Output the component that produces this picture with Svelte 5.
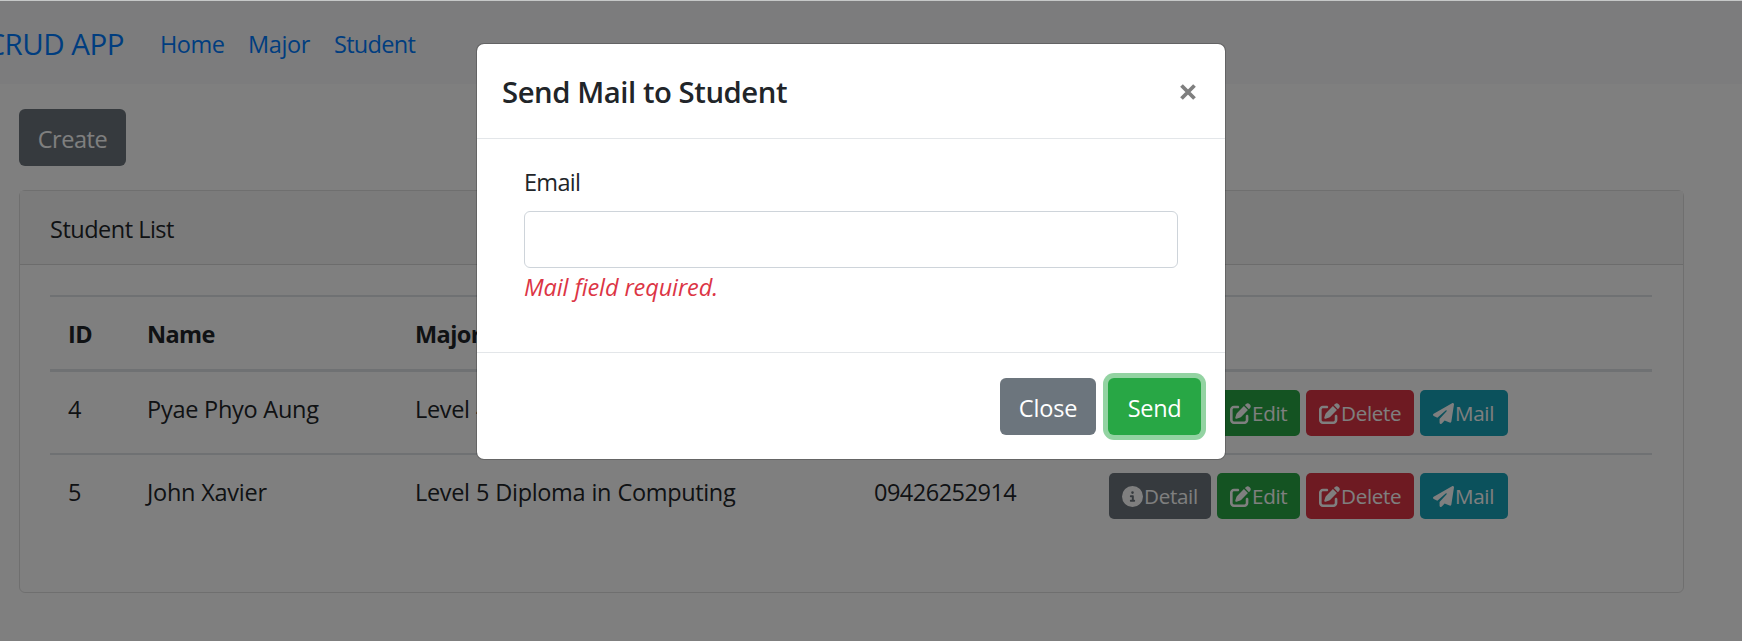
<script>
  const icons = {
    info: 'M256 512A256 256 0 1 0 256 0a256 256 0 1 0 0 512zM216 336h24V272H216c-13.3 0-24-10.7-24-24s10.7-24 24-24h48c13.3 0 24 10.7 24 24v88h8c13.3 0 24 10.7 24 24s-10.7 24-24 24H216c-13.3 0-24-10.7-24-24s10.7-24 24-24zm40-208a32 32 0 1 1 0 64 32 32 0 1 1 0-64z',
    pen: 'M471.6 21.7c-21.9-21.9-57.3-21.9-79.2 0L362.3 51.7l97.9 97.9 30.1-30.1c21.9-21.9 21.9-57.3 0-79.2L471.6 21.7zm-299.2 220c-6.1 6.1-10.8 13.6-13.5 21.9l-29.6 88.8c-2.9 8.6-.6 18.1 5.8 24.6s15.9 8.7 24.6 5.8l88.8-29.6c8.2-2.7 15.7-7.4 21.9-13.5L437.7 172.3 339.7 74.3 172.4 241.7zM96 64C43 64 0 107 0 160V416c0 53 43 96 96 96H352c53 0 96-43 96-96V320c0-17.7-14.3-32-32-32s-32 14.3-32 32v96c0 17.7-14.3 32-32 32H96c-17.7 0-32-14.3-32-32V160c0-17.7 14.3-32 32-32h96c17.7 0 32-14.3 32-32s-14.3-32-32-32H96z',
    plane: 'M498.1 5.6c10.1 7 15.4 19.1 13.5 31.2l-64 416c-1.5 9.7-7.4 18.2-16 23s-18.9 5.4-28 1.6L284 427.7l-68.5 74.1c-8.9 9.7-22.9 12.9-35.2 8.1S160 493.2 160 480V396.4c0-4 1.5-7.8 4.2-10.7L331.8 202.8c5.8-6.3 5.6-16-.4-22s-15.7-6.4-22-.7L106 360.8 17.7 316.6C7.1 311.3 .3 300.7 0 288.9s5.9-22.8 16.1-28.7l448-256c10.7-6.1 23.9-5.5 34 1.4z'
  };

  const actions = [
    { label: 'Detail', icon: 'info', kind: 'detail' },
    { label: 'Edit', icon: 'pen', kind: 'edit' },
    { label: 'Delete', icon: 'pen', kind: 'delete' },
    { label: 'Mail', icon: 'plane', kind: 'mail' }
  ];

  const students = [
    { id: 4, name: 'Pyae Phyo Aung', major: 'Level 4', phone: '' },
    { id: 5, name: 'John Xavier', major: 'Level 5 Diploma in Computing', phone: '09426252914' }
  ];

  let email = $state('');
</script>

<div class="page">
  <nav class="navbar">
    <a class="brand" href="#top">CRUD APP</a>
    <a class="link home" href="#home">Home</a>
    <a class="link major" href="#major">Major</a>
    <a class="link student" href="#student">Student</a>
  </nav>

  <main>
    <button class="btn create">Create</button>

    <section class="card">
      <header class="card-header">Student List</header>
      <div class="table">
        <div class="row head">
          <span>ID</span><span>Name</span><span>Major</span><span></span><span></span>
        </div>
        {#each students as s}
          <div class="row">
            <span>{s.id}</span>
            <span class="name">{s.name}</span>
            <span class="level">{s.major}</span>
            <span class="phone">{s.phone}</span>
            <span class="actions">
              {#each actions as a}
                <button class="sm {a.kind}">
                  <svg viewBox="0 0 512 512"><path d={icons[a.icon]} /></svg>{a.label}
                </button>
              {/each}
            </span>
          </div>
        {/each}
      </div>
    </section>
  </main>

  <div class="backdrop"></div>

  <div class="modal" role="dialog" aria-labelledby="mail-title">
    <header class="modal-header">
      <h5 id="mail-title">Send Mail to Student</h5>
      <button class="dismiss" aria-labelledby="close-button">
        <svg viewBox="0 0 16 16"><path d="M1.5 1.5l13 13M14.5 1.5l-13 13" /></svg>
      </button>
    </header>
    <div class="modal-body">
      <label for="email">Email</label>
      <input id="email" type="email" bind:value={email} />
      <em>Mail field required.</em>
    </div>
    <footer class="modal-footer">
      <button id="close-button" class="btn close">Close</button>
      <button class="btn send">Send</button>
    </footer>
  </div>
</div>

<style>
  :global(body) {
    margin: 0;
    background: #fff;
  }
  .page, .page * {
    box-sizing: border-box;
  }
  .page {
    position: relative;
    height: 641px;
    padding-top: 1px;
    overflow: hidden;
    background: linear-gradient(#c6c8c8 1px, #fff 1px);
    color: #212529;
    font: 400 23.5px/36px 'Open Sans', 'Noto Sans', sans-serif;
    letter-spacing: -0.3px;
    white-space: nowrap;
  }
  button {
    border: 0;
    padding: 0;
    font: inherit;
    letter-spacing: inherit;
    color: #fff;
  }
  .navbar {
    display: flex;
    align-items: center;
    height: 83px;
    background: #f8f9fa;
  }
  a {
    color: #007bff;
    text-decoration: none;
  }
  .brand {
    display: flex;
    justify-content: flex-end;
    width: 124px;
    margin-right: 36px;
    font-size: 29.5px;
    letter-spacing: -0.5px;
    padding-top: 3px;
  }
  .link {
    padding-top: 3px;
  }
  .home {
    width: 88px;
    letter-spacing: -0.5px;
  }
  .major {
    width: 86px;
    letter-spacing: -0.4px;
  }
  .student {
    letter-spacing: -0.7px;
  }
  main {
    padding: 25px 58px 0 19px;
  }
  .btn {
    display: block;
    height: 57px;
    padding-top: 2px;
    border-radius: 6px;
  }
  .create {
    width: 107px;
    background: #6c757d;
    letter-spacing: -0.45px;
  }
  .card {
    height: 403px;
    margin-top: 24px;
    border: 1px solid #dfdfdf;
    border-radius: 6px;
  }
  .card-header {
    height: 74px;
    padding: 20px 30px 0;
    background: #f7f7f7;
    border-bottom: 1px solid #d8d8d8;
    letter-spacing: -0.5px;
  }
  .table {
    padding: 30px 31px 0 30px;
  }
  .row {
    display: grid;
    grid-template-columns: 79px 268px 459px 235px 1fr;
    height: 83px;
    padding-top: 19px;
    border-top: 2px solid #dee2e6;
  }
  .row > span {
    padding-left: 18px;
  }
  .row:nth-child(2) {
    height: 81px;
    border-top: 0;
  }
  .head {
    height: 77px;
    border-bottom: 3px solid #dee2e6;
    font-weight: 700;
    letter-spacing: -0.6px;
  }
  .name {
    letter-spacing: -0.25px;
  }
  .level {
    letter-spacing: -0.35px;
    word-spacing: 0.6px;
  }
  .phone {
    letter-spacing: -0.5px;
  }
  .actions {
    display: flex;
    gap: 6px;
    margin-top: -1px;
  }
  .sm {
    display: flex;
    align-items: center;
    height: 46px;
    padding: 0 0 0 13px;
    border-radius: 5px;
    font-size: 20.6px;
    letter-spacing: -0.3px;
  }
  .sm svg {
    width: 21px;
    height: 21px;
    flex: none;
    fill: #fff;
    margin-right: 1px;
  }
  .detail {
    width: 102px;
    background: #6c757d;
  }
  .edit {
    width: 83px;
    background: #28a745;
  }
  .delete {
    width: 108px;
    background: #dc3545;
  }
  .mail {
    width: 88px;
    background: #17a2b8;
  }
  .backdrop {
    position: absolute;
    inset: 1px 0 0;
    background: rgba(0, 0, 0, 0.5);
  }
  .modal {
    position: absolute;
    left: 476px;
    top: 43px;
    width: 750px;
    height: 417px;
    display: flex;
    flex-direction: column;
    background: #fff;
    background-clip: padding-box;
    border: 1px solid rgba(0, 0, 0, 0.2);
    border-radius: 8px;
  }
  .modal-header {
    display: flex;
    justify-content: space-between;
    height: 95px;
    padding: 26px 29px 0 25px;
    border-bottom: 1px solid #e3e6e9;
  }
  h5 {
    margin: 0;
    font-size: 29.3px;
    line-height: 44px;
    font-weight: 600;
    letter-spacing: -0.45px;
  }
  .dismiss {
    display: flex;
    width: 16px;
    height: 16px;
    margin-top: 14px;
    background: none;
  }
  .dismiss svg {
    width: 16px;
    height: 16px;
    fill: none;
    stroke: #7f7f7f;
    stroke-width: 3.8;
  }
  .modal-body {
    display: flex;
    flex-direction: column;
    height: 213px;
    padding: 25px 47px 0;
  }
  label {
    letter-spacing: -0.7px;
  }
  input {
    height: 57px;
    margin: 11px 0 1px;
    padding: 0 17px;
    border: 1px solid #ced4da;
    border-radius: 6px;
    font: inherit;
    outline: none;
  }
  em {
    color: #dc3545;
    letter-spacing: -0.1px;
  }
  .modal-footer {
    display: flex;
    justify-content: flex-end;
    gap: 12px;
    padding: 25px 24px 0;
    border-top: 1px solid #e3e6e9;
  }
  .close {
    width: 96px;
    background: #6c757d;
    letter-spacing: -0.2px;
  }
  .send {
    width: 93px;
    background: #28a745;
    letter-spacing: -0.3px;
    box-shadow: 0 0 0 5px rgba(40, 167, 69, 0.5);
  }
</style>
